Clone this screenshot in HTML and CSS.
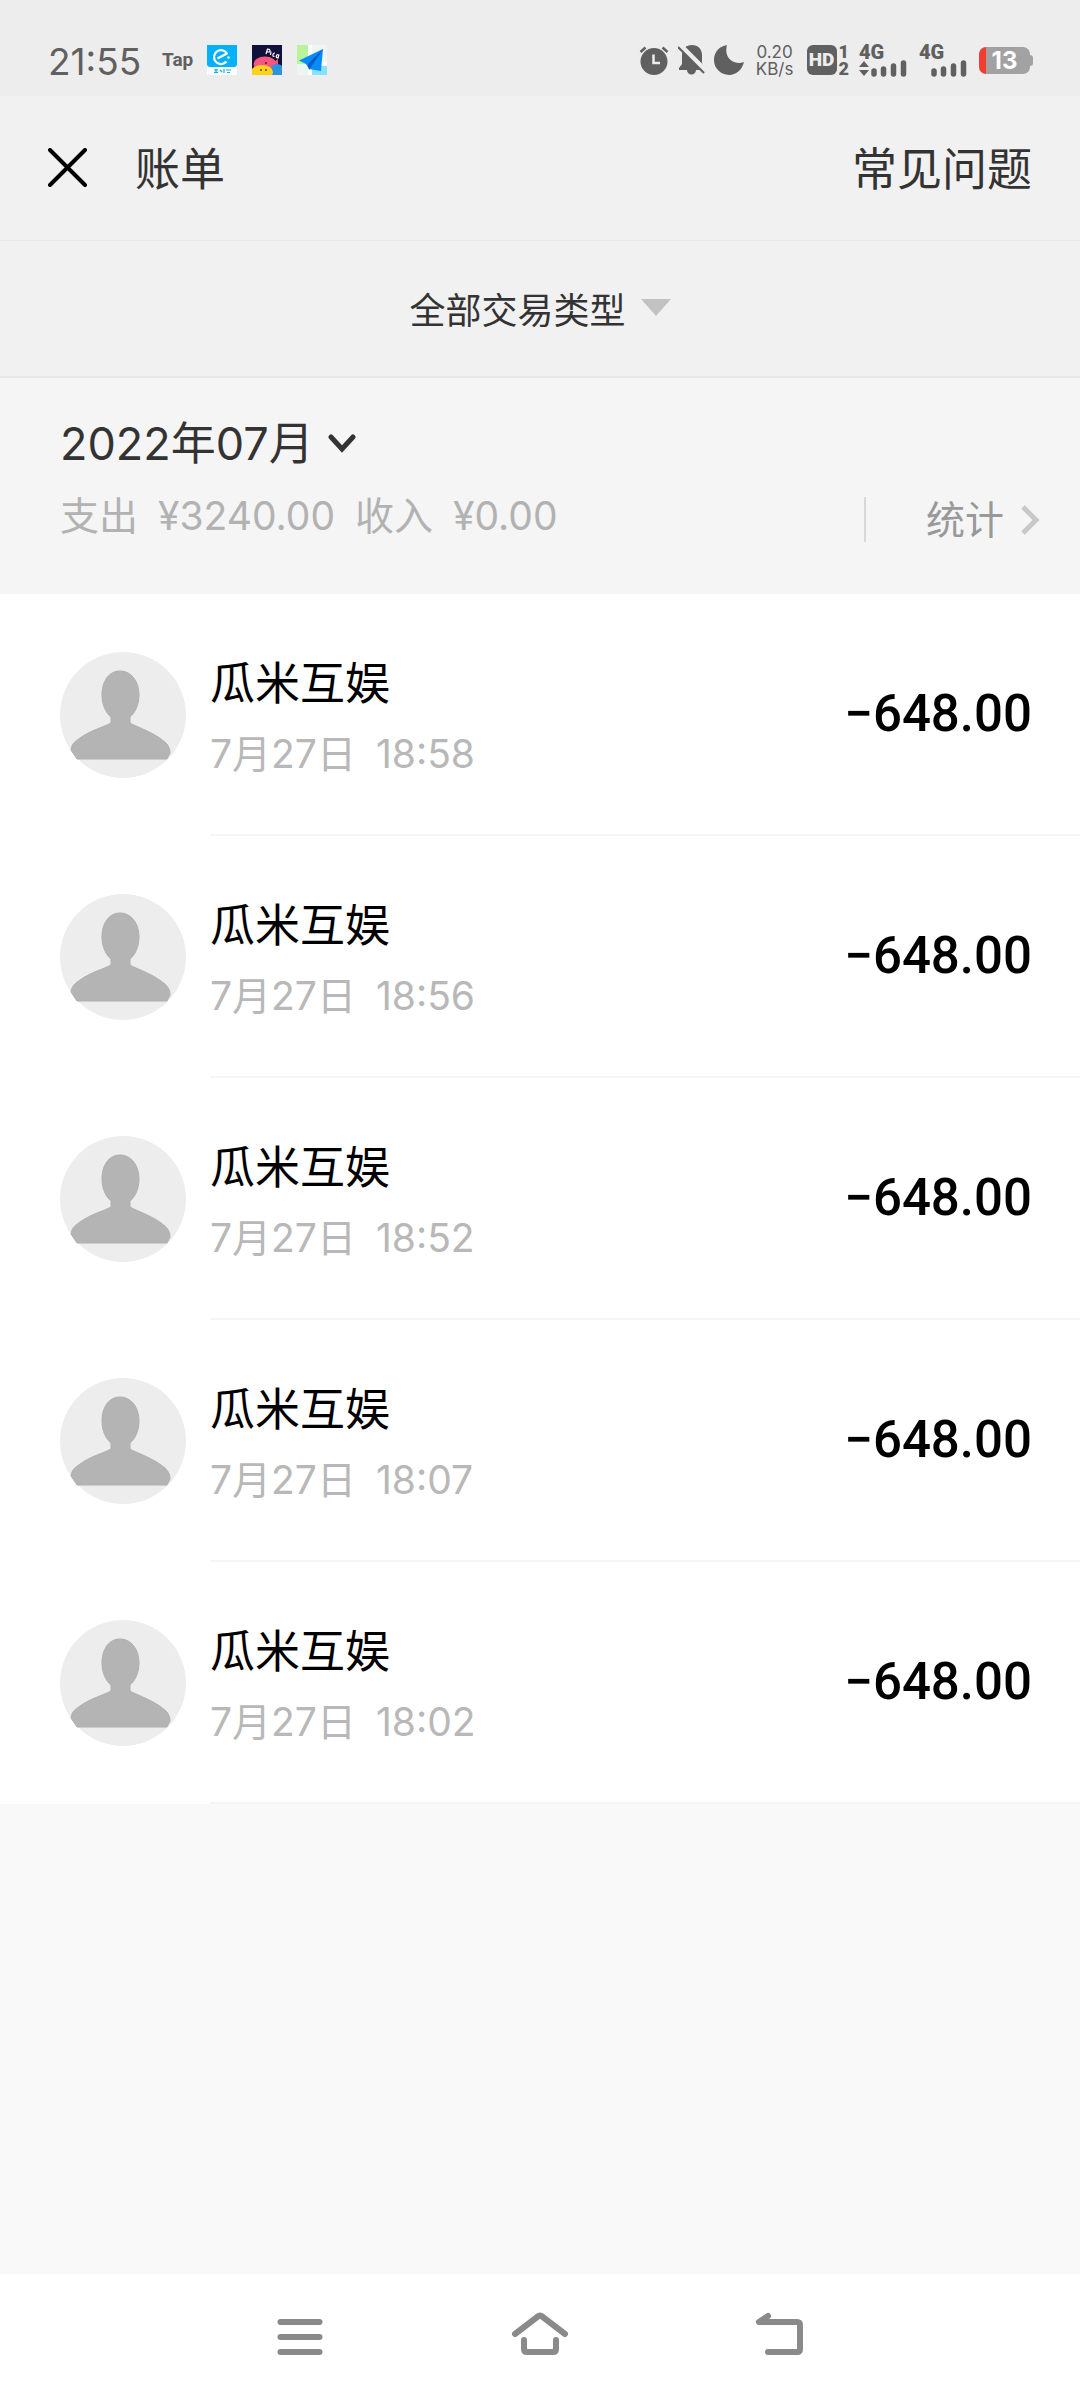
FILE: index.html
```html
<!DOCTYPE html>
<html lang="zh-CN">
<head>
    <meta charset="UTF-8">
    <meta name="viewport" content="width=device-width, initial-scale=1.0">
    <title>账单</title>
    <link rel="stylesheet" href="styles.css">
</head>
<body>
    <div class="status-bar">
        <div class="status-left">
            <span class="clock">21:55</span>
            <span class="tap">Tap</span>
            <svg class="app-icon" viewBox="0 0 30 30">
                <rect width="30" height="30" fill="#fff"/>
                <path d="M0 0H30V19Q30 22 27 22H3Q0 22 0 19Z" fill="#02b1f8"/>
                <path d="M10.500 13.500L20 8.500A7 7 0 1 0 19.500 16.500" fill="none" stroke="#fff" stroke-width="2.200" stroke-linejoin="round"/>
                <circle cx="21.500" cy="12.500" r="1.300" fill="#fff"/>
                <path d="M7 25h4M7 27.500h4M9 24v4M13 25l2 2M17 24v4M19 25h5M20 27.500h3" stroke="#02b1f8" stroke-width="1.200"/>
            </svg>
            <svg class="app-icon" viewBox="0 0 30 30">
                <rect width="30" height="30" fill="#11103c"/>
                <ellipse cx="13" cy="19" rx="11.500" ry="7.500" fill="#f9577f"/>
                <path d="M22 17L26 14V20Z" fill="#f9577f"/>
                <ellipse cx="25" cy="26" rx="7.500" ry="7" fill="#2c94df"/>
                <ellipse cx="10" cy="27" rx="11" ry="7" fill="#ffd31a"/>
                <circle cx="14" cy="18" r="1" fill="#5b1730"/>
                <circle cx="9" cy="25" r="1" fill="#6b4a00"/>
                <circle cx="14" cy="25" r="1" fill="#6b4a00"/>
                <path d="M14 9L15.500 4Q19 4 17.500 7L15 7M19 6.500L18.500 10M23 8Q20.500 8 21 11L22.500 11.500M26.500 9.500Q23.500 9.500 24.500 12.500L26 13L27 9.500" fill="none" stroke="#fff" stroke-width="1.200"/>
            </svg>
            <svg class="app-icon" viewBox="0 0 30 30">
                <rect width="30" height="30" fill="#eef5f4"/>
                <rect width="11" height="19" fill="#b9f39b"/>
                <rect x="15" y="21" width="15" height="9" fill="#86e3fb"/>
                <path d="M11 0H15V30H11ZM15 17H30V21H15Z" fill="#fff"/>
                <path d="M26 4L2 15.500L9 19L12 24L24 26Z" fill="#078bfb"/>
                <path d="M26 4L11 19L12 25Z" fill="#0859c4"/>
            </svg>
        </div>
        <div class="status-right">
            <svg width="30" height="30" viewBox="0 0 30 30">
                <circle cx="15" cy="16.500" r="13.500" fill="#606060"/>
                <path d="M1.500 7L6.500 2.500M28.500 7L23.500 2.500" stroke="#606060" stroke-width="2.500"/>
                <path d="M14.500 9.500V18H21" fill="none" stroke="#ededed" stroke-width="2.500"/>
            </svg>
            <svg class="bell" width="28" height="30" viewBox="0 0 28 30">
                <path d="M14 0C20 0 24 4 24 10V18L27 24V25H18A4.500 4.500 0 0 1 9 25H1V23L4 19V10C4 4 8 0 14 0Z" fill="#606060"/>
                <path d="M2 0L28 26" stroke="#ededed" stroke-width="5"/>
                <path d="M0 2L26 28" stroke="#606060" stroke-width="2.200"/>
            </svg>
            <svg class="moon" width="30" height="30" viewBox="0 0 30 30">
                <path d="M13 0C3 2 0 9 0 15A15 15 0 0 0 15 30C22 30 28 25 30 17C27 18 24 18.500 20 17C13 14 11 7 13 0Z" fill="#606060"/>
            </svg>
            <div class="net-speed"><span>0.20</span><span>KB/s</span></div>
            <span class="hd">HD</span>
            <div class="sim"><span>1</span><span>2</span></div>
            <div class="signal">
                <span>4G</span>
                <svg width="48" height="17" viewBox="0 0 48 17">
                    <path d="M0 7L5 1L10 7ZM0 10L5 16L10 10Z" fill="#606060"/>
                    <path d="M15 11V14M24.500 9V14M34.500 6V14M44.500 3V14" stroke="#606060" stroke-width="5.500" stroke-linecap="round"/>
                </svg>
            </div>
            <div class="signal">
                <span>4G</span>
                <svg width="48" height="17" viewBox="0 0 48 17">
                    <path d="M15 11V14M24.500 9V14M34.500 6V14M44.500 3V14" stroke="#606060" stroke-width="5.500" stroke-linecap="round"/>
                </svg>
            </div>
            <div class="battery"><span>13</span></div>
        </div>
    </div>

    <header class="title-bar">
        <button class="close" aria-label="关闭">
            <svg width="40" height="40" viewBox="0 0 40 40">
                <path d="M2 2L37 37M37 2L2 37" stroke="#000" stroke-width="4" stroke-linecap="round"/>
            </svg>
        </button>
        <h1>账单</h1>
        <a class="faq" href="#">常见问题</a>
    </header>

    <button class="filter">
        全部交易类型
        <svg width="30" height="17" viewBox="0 0 30 17"><path d="M0 0H30L15 17Z" fill="#c2c2c2"/></svg>
    </button>

    <section class="summary">
        <div>
            <button class="month">
                2022年07月
                <svg width="28" height="20" viewBox="0 0 28 20"><path d="M3 3L14 15L25 3" fill="none" stroke="#333" stroke-width="5" stroke-linecap="round"/></svg>
            </button>
            <p class="totals"><span>支出</span><span>¥3240.00</span><span>收入</span><span>¥0.00</span></p>
        </div>
        <a class="stats" href="#">
            统计
            <svg width="20" height="32" viewBox="0 0 20 32"><path d="M3 3L16 16L3 29" fill="none" stroke="#c8c8c8" stroke-width="5"/></svg>
        </a>
    </section>

    <svg class="defs" width="0" height="0">
        <symbol id="avatar" viewBox="0 0 126 126">
            <circle cx="63" cy="63" r="63" fill="#ededed"/>
            <path d="M60 19C71 19 79 29 79 43C79 53 75 61 70 65V71C76 75 92 79 105 90C109 94 110 97 110 101L107 107H17L11 98C12 92 14 90 20 86C31 78 44 75 51 71V65C46 61 42 53 42 43C42 29 49 19 60 19Z" fill="#b4b4b4" stroke="#b0b0b0" stroke-width="1"/>
        </symbol>
    </svg>

    <ul class="bills">
        <li>
            <svg class="avatar"><use href="#avatar"/></svg>
            <div class="detail">
                <div class="payee">
                    <p class="name">瓜米互娱</p>
                    <p class="time"><span>7月27日</span><span>18:58</span></p>
                </div>
                <span class="amount">−648.00</span>
            </div>
        </li>
        <li>
            <svg class="avatar"><use href="#avatar"/></svg>
            <div class="detail">
                <div class="payee">
                    <p class="name">瓜米互娱</p>
                    <p class="time"><span>7月27日</span><span>18:56</span></p>
                </div>
                <span class="amount">−648.00</span>
            </div>
        </li>
        <li>
            <svg class="avatar"><use href="#avatar"/></svg>
            <div class="detail">
                <div class="payee">
                    <p class="name">瓜米互娱</p>
                    <p class="time"><span>7月27日</span><span>18:52</span></p>
                </div>
                <span class="amount">−648.00</span>
            </div>
        </li>
        <li>
            <svg class="avatar"><use href="#avatar"/></svg>
            <div class="detail">
                <div class="payee">
                    <p class="name">瓜米互娱</p>
                    <p class="time"><span>7月27日</span><span>18:07</span></p>
                </div>
                <span class="amount">−648.00</span>
            </div>
        </li>
        <li>
            <svg class="avatar"><use href="#avatar"/></svg>
            <div class="detail">
                <div class="payee">
                    <p class="name">瓜米互娱</p>
                    <p class="time"><span>7月27日</span><span>18:02</span></p>
                </div>
                <span class="amount">−648.00</span>
            </div>
        </li>
    </ul>

    <nav class="nav-bar">
        <button aria-label="菜单">
            <svg width="60" height="50" viewBox="0 -2 60 50"><path d="M10.500 8H49.500M10.500 23H49.500M10.500 38H49.500"/></svg>
        </button>
        <button aria-label="主页">
            <svg width="60" height="50" viewBox="0 -2 60 50"><path d="M5 20L28.500 2Q30 1 31.500 2L55 20M14 26V35Q14 38 17 38H43Q46 38 46 35V26"/></svg>
        </button>
        <button aria-label="返回">
            <svg width="60" height="50" viewBox="0 -2 60 50"><path d="M18 2L9 8H47Q50 8 50 11V35Q50 38 47 38H18"/></svg>
        </button>
    </nav>
</body>
</html>
```
FILE: styles.css
```css
* {
    box-sizing: border-box;
}

body {
    margin: 0;
    min-height: 100vh;
    display: flex;
    flex-direction: column;
    background: #f9f9f9;
    color: #333;
    font-family: Inter, "Noto Sans CJK SC", sans-serif;
    font-size: 45px;
}

h1, p, ul {
    margin: 0;
    padding: 0;
    font-weight: normal;
}

svg {
    display: block;
}

button {
    border: none;
    padding: 0;
    background: none;
    color: inherit;
    font: inherit;
    cursor: pointer;
}

a {
    color: inherit;
    text-decoration: none;
}

/* status bar */
.status-bar {
    display: flex;
    justify-content: space-between;
    height: 96px;
    padding: 24px 48px 0;
    background: #ededed;
    color: #606060;
}

.status-left, .status-right {
    display: flex;
    align-items: center;
}

.clock {
    width: 114px;
    padding-top: 3px;
    font-size: 37px;
}

.tap {
    width: 45px;
    font: 700 19px/30px Roboto, sans-serif;
}

.app-icon {
    width: 30px;
    height: 30px;
    margin-right: 15px;
}

.bell {
    margin-left: 9px;
}

.moon {
    margin-left: 8px;
}

.net-speed {
    display: flex;
    flex-direction: column;
    width: 38px;
    margin-left: 12px;
    padding-top: 2px;
    font-size: 17px;
    line-height: 17px;
    text-align: center;
}

.hd {
    width: 30px;
    margin-left: 13px;
    border-radius: 6px;
    background: #606060;
    color: #ededed;
    font: 900 19px/30px Roboto, sans-serif;
    text-align: center;
}

.sim {
    display: flex;
    flex-direction: column;
    margin: 0 10px 0 2px;
    font: 900 18px/17px Roboto, sans-serif;
}

.signal {
    display: flex;
    flex-direction: column;
    width: 48px;
    margin-right: 12px;
    padding-top: 2px;
    font: 900 20px/15px Roboto, sans-serif;
}

.battery {
    width: 51px;
    height: 27px;
    margin-right: 2px;
    border-radius: 7px;
    background: linear-gradient(to right, #f53c30 7px, #a2a2a2 7px);
    color: #fff;
    font: 700 24px/27px Inter, sans-serif;
    text-align: center;
    position: relative;
}

.battery::after {
    content: "";
    position: absolute;
    right: -3px;
    top: 8px;
    width: 3px;
    height: 11px;
    border-radius: 0 3px 3px 0;
    background: #a2a2a2;
}

/* title and filter */
.title-bar {
    display: flex;
    align-items: center;
    height: 145px;
    padding: 0 48px;
    border-bottom: 1px solid #e8e8e8;
    background: #f1f1f1;
}

.title-bar h1, .faq {
    padding-bottom: 4px;
    font-size: 45px;
}

.title-bar h1 {
    margin-left: 47px;
}

.faq {
    margin-left: auto;
}

.filter {
    display: flex;
    align-items: center;
    justify-content: center;
    gap: 15px;
    height: 137px;
    padding-bottom: 2px;
    border-bottom: 2px solid #e8e8e8;
    background: #f1f1f1;
    font-size: 36px;
}

/* month summary */
.summary {
    display: flex;
    justify-content: space-between;
    height: 216px;
    padding: 36px 40px 0 60px;
    background: #f5f5f5;
}

.month {
    display: flex;
    align-items: center;
    gap: 14px;
    line-height: 60px;
}

.totals, .time {
    display: flex;
    gap: 20px;
    font-size: 39px;
    line-height: 48px;
    color: #b2b2b2;
}

.totals {
    margin-top: 18px;
}

.stats {
    display: flex;
    align-items: center;
    gap: 16px;
    height: 45px;
    margin-top: 83px;
    padding-left: 60px;
    border-left: 2px solid #d8d8d8;
    color: #999;
    font-size: 39px;
    line-height: 45px;
}

/* bill list */
.bills {
    list-style: none;
    background: #fff;
}

.bills li {
    display: flex;
    align-items: center;
    padding-left: 60px;
}

.avatar {
    width: 126px;
    height: 126px;
    margin-right: 24px;
}

.detail {
    flex: 1;
    display: flex;
    align-items: center;
    justify-content: space-between;
    height: 242px;
    padding-right: 48px;
    border-bottom: 2px solid #f5f5f5;
}

.payee {
    padding-top: 4px;
}

.name {
    margin-bottom: 16px;
    line-height: 60px;
    color: #000;
}

.time {
    color: #b8b8b8;
}

.amount {
    color: #000;
    font: 500 51px/60px Roboto, sans-serif;
}

/* system buttons */
.nav-bar {
    display: flex;
    justify-content: center;
    gap: 180px;
    height: 126px;
    margin-top: auto;
    background: #fff;
}

.nav-bar path {
    fill: none;
    stroke: #8a8a8a;
    stroke-width: 6;
    stroke-linecap: round;
    stroke-linejoin: round;
}
```
